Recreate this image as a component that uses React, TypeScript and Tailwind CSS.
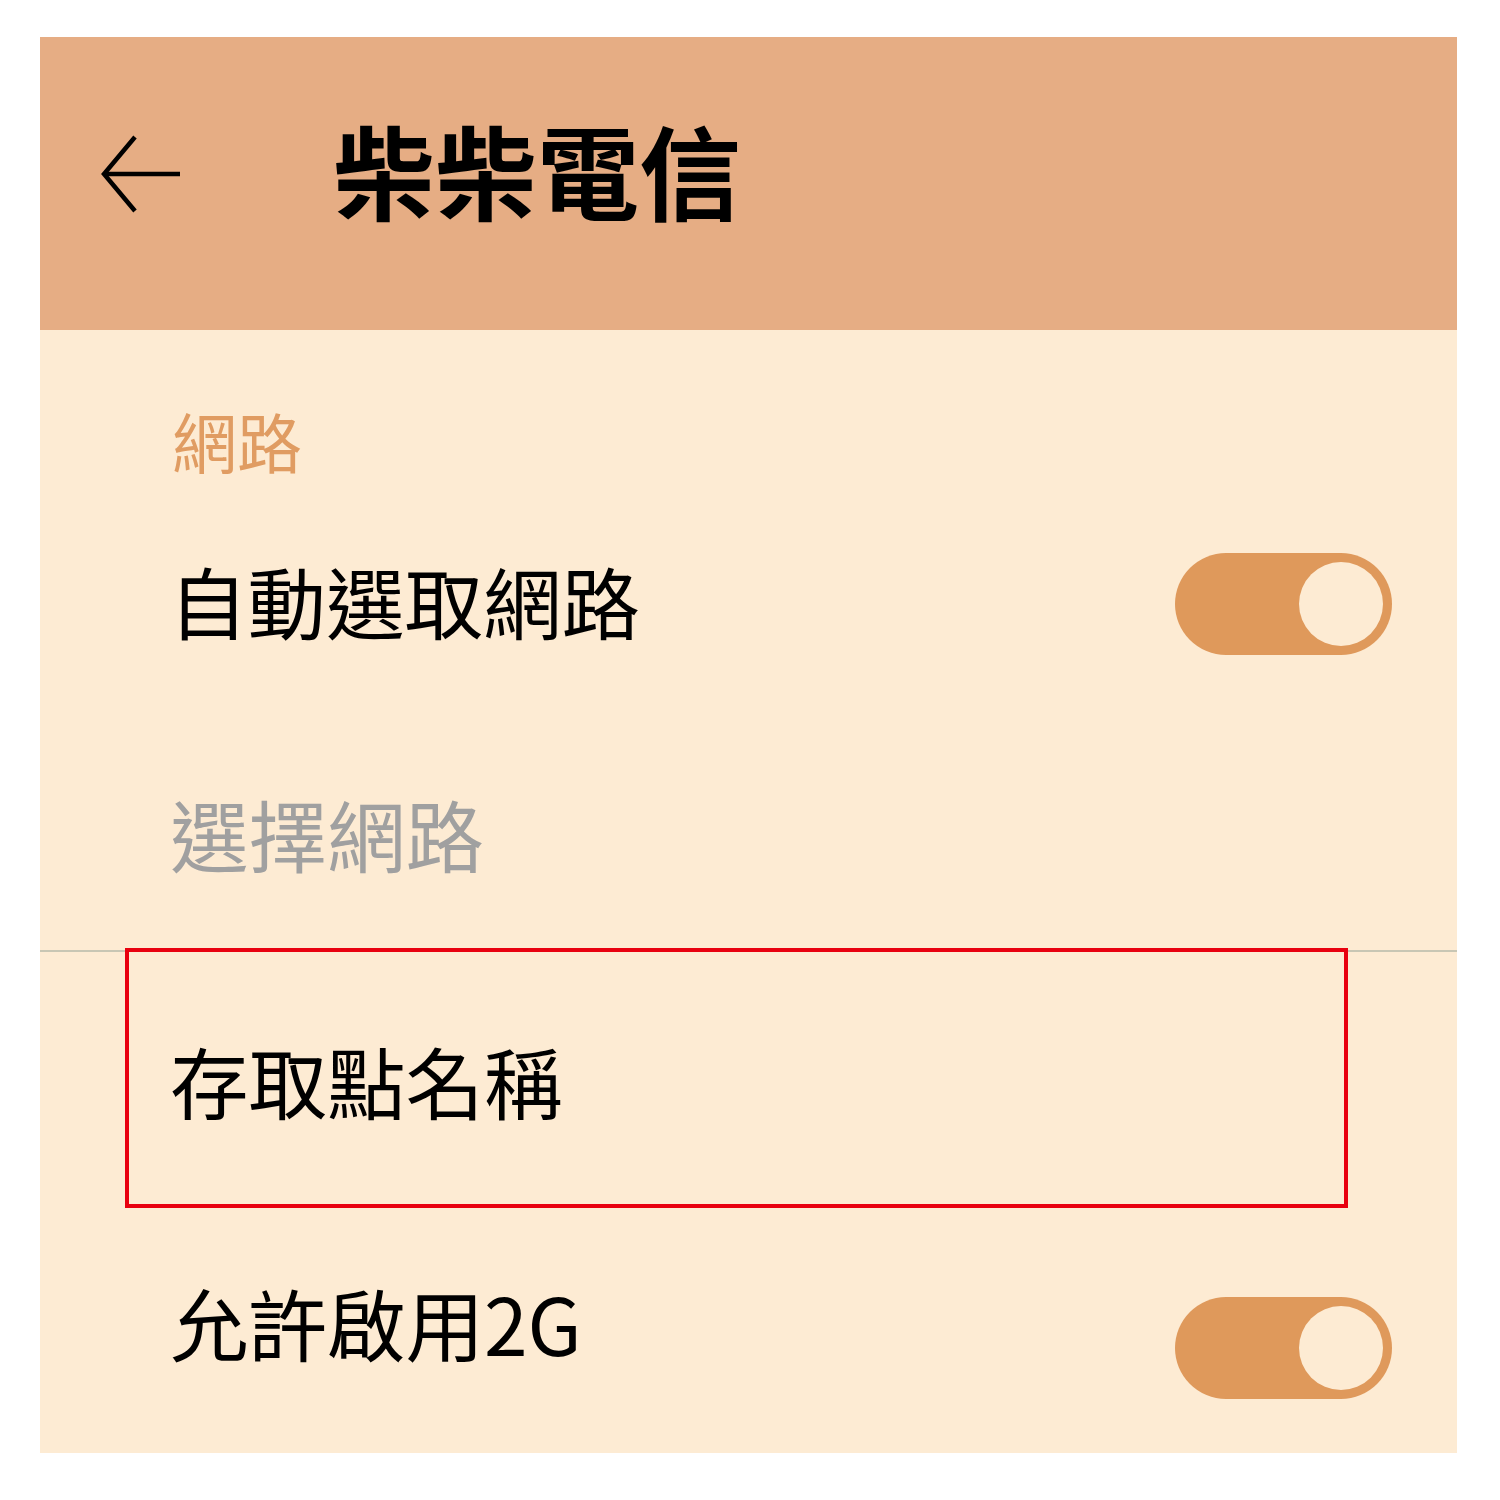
import React from "react";

const font = { fontFamily: '"Noto Sans CJK TC", "Noto Sans CJK SC", "Noto Sans", sans-serif' };

function Toggle() {
  return (
    <div className="w-[217px] h-[102px] rounded-full bg-[#df995b] flex items-center justify-end pr-[9px] shrink-0">
      <div className="w-[84px] h-[84px] rounded-full bg-[#fdebd3]" />
    </div>
  );
}

export default function App() {
  return (
    <div className="w-[1500px] h-[1500px] bg-white pt-[37px] pl-[40px]" style={font}>
      <div className="relative w-[1417px] h-[1416px] bg-[#fdebd3] flex flex-col">
        {/* header */}
        <div className="h-[293px] bg-[#e6ad84] flex items-center pl-[60px] pb-[20px] shrink-0">
          <svg width="82" height="78" viewBox="0 0 82 78" className="shrink-0">
            <path d="M80 39 H4" stroke="#000" strokeWidth="4.5" fill="none" />
            <path d="M35 2 L4 39 L35 76" stroke="#000" strokeWidth="4.5" fill="none" strokeLinejoin="miter" />
          </svg>
          <div className="ml-[151px] mb-[10px] text-[102px] leading-none font-bold text-black">柴柴電信</div>
        </div>

        {/* section header */}
        <div className="h-[194px] pt-[78px] pl-[132px] shrink-0">
          <div className="text-[65px] leading-none text-[#e09c62]">網路</div>
        </div>

        {/* auto select */}
        <div className="h-[160px] flex items-center justify-between pl-[129px] pr-[65px] shrink-0">
          <div className="text-[78.5px] leading-none text-black mb-[8px]">自動選取網路</div>
          <Toggle />
        </div>

        {/* choose network */}
        <div className="h-[268px] pt-[110px] pl-[130px] shrink-0 border-b-2 border-[#c8c6b4]">
          <div className="text-[78.5px] leading-none text-[#a0a0a0]">選擇網路</div>
        </div>

        {/* APN */}
        <div className="h-[262px] flex items-center pl-[130px] shrink-0">
          <div className="text-[78.5px] leading-none text-black mb-[6px]">存取點名稱</div>
        </div>

        {/* 2G */}
        <div className="flex-1 flex items-start justify-between pl-[130px] pr-[65px]">
          <div className="mt-[69px] text-[78.5px] leading-none text-black">允許啟用2G</div>
          <div className="mt-[83px]">
            <Toggle />
          </div>
        </div>

        {/* red annotation box */}
        <div className="absolute left-[85px] top-[911px] w-[1223px] h-[260px] border-4 border-[#e8000f]" />
      </div>
    </div>
  );
}
